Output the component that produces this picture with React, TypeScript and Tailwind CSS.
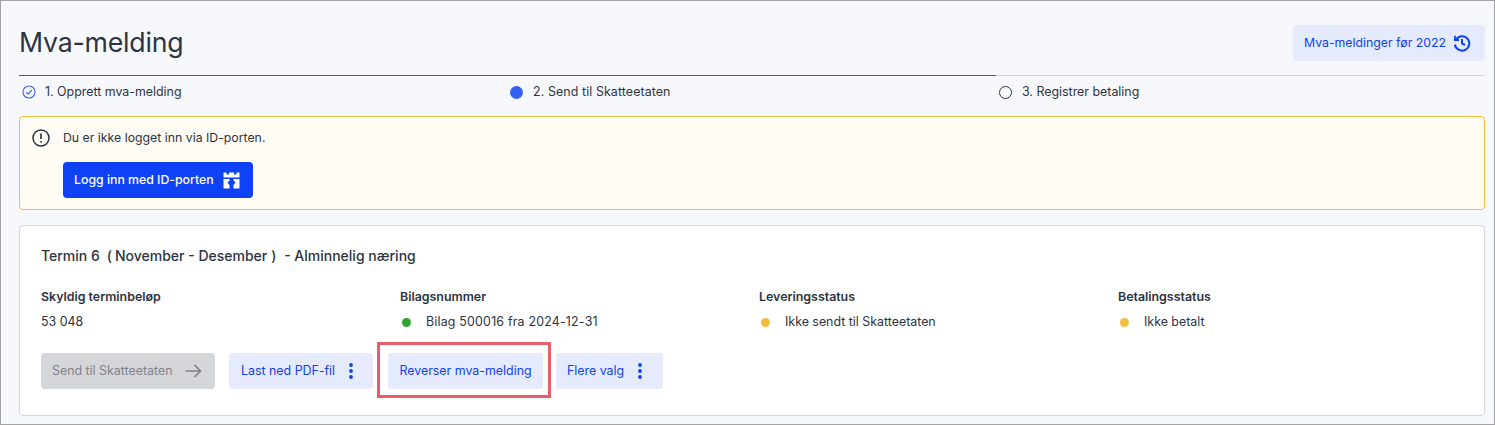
const FONT = "font-['Inter','Noto_Sans',sans-serif]";

function Dots() {
  return (
    <svg width="4" height="16" viewBox="0 0 4 16" className="ml-[14px]" fill="#0f41f5">
      <circle cx="2" cy="2" r="1.9" />
      <circle cx="2" cy="8" r="1.9" />
      <circle cx="2" cy="14" r="1.9" />
    </svg>
  );
}

function CheckCircle() {
  return (
    <svg width="14" height="14" viewBox="0 0 14 14" fill="none" stroke="#3e63f2" strokeWidth="1.1">
      <circle cx="7" cy="7" r="6" />
      <path d="M4.2 7.2 L6.2 9.2 L9.9 5.2" />
    </svg>
  );
}

function HistoryIcon() {
  return (
    <svg width="18" height="18" viewBox="0 0 18 18" fill="none" stroke="#0f41f5" strokeWidth="2">
      <path d="M3.2 5.2 A7.2 7.2 0 1 1 1.9 10.5" />
      <path d="M1.9 1.8 V6 H6.1" strokeWidth="1.8" />
      <path d="M9 5 V9.4 L12 11" />
    </svg>
  );
}

function CastleIcon() {
  return (
    <svg width="17" height="17" viewBox="0 0 17 17" fill="#fff">
      <path d="M0.5 0.5 H3.5 V2.5 H6 V0.5 H11 V2.5 H13.5 V0.5 H16.5 V5.5 H0.5 Z" />
      <path d="M0.5 7 H6.5 L6.5 8.5 L4.5 10.5 L6.5 13 V16.5 H0.5 Z" />
      <path d="M16.5 7 H10.5 L10.5 8.5 L12.5 10.5 L10.5 13 V16.5 H16.5 Z" />
    </svg>
  );
}

function Column({ title, children }: { title: string; children: React.ReactNode }) {
  return (
    <div className="flex flex-col">
      <div className="text-[12.4px] leading-[16px] font-semibold text-[#2c3442]">{title}</div>
      <div className="mt-[9px] flex h-[16px] items-center text-[12.4px] text-[#2c3442]">{children}</div>
    </div>
  );
}

function StatusDot({ color }: { color: string }) {
  return <span className={`mr-[15px] ml-[2px] h-[9px] w-[9px] rounded-full ${color}`} />;
}

export default function App() {
  return (
    <div className={`${FONT} h-[425px] w-[1495px] overflow-hidden border border-[#a3a3a3] bg-[#f7f8fc] pt-[22px] pr-[9px] pl-[18px] text-[#2c3442]`}>
      <div className="flex h-[38px] items-center justify-between">
        <h1 className="text-[26.7px] leading-[37px] font-normal tracking-[-0.2px] text-[#2c3442]">Mva-melding</h1>
        <button className="flex h-[36px] w-[192px] items-center self-end rounded-[4px] bg-[#e6eafd] pl-[11px] text-[12.3px] text-[#0f41f5]">
          Mva-meldinger før 2022
          <span className="ml-[7px]"><HistoryIcon /></span>
        </button>
      </div>

      <div className="mt-[14px] flex h-[1px]">
        <div className="w-[977px] bg-[#5c5f68]" />
        <div className="flex-1 bg-[#d4d5da]" />
      </div>

      <div className="mt-[8px] flex h-[16px] items-center text-[12.4px]">
        <div className="flex w-[488px] items-center pl-[3px]">
          <CheckCircle />
          <span className="ml-[9px]">1. Opprett mva-melding</span>
        </div>
        <div className="flex w-[489px] items-center pl-[3px]">
          <span className="h-[13px] w-[13px] rounded-full bg-[#3460f5]" />
          <span className="ml-[10px] tracking-[0.1px]">2. Send til Skatteetaten</span>
        </div>
        <div className="flex items-center pl-[3px]">
          <span className="h-[13px] w-[13px] rounded-full border-[1.5px] border-[#2c3442]" />
          <span className="ml-[10px]">3. Registrer betaling</span>
        </div>
      </div>

      <div className="mt-[16px] h-[94px] rounded-[4px] border border-[#f5bd3d] bg-[#fffcf5] pt-[12px] pl-[12px]">
        <div className="flex items-center">
          <svg width="18" height="18" viewBox="0 0 18 18" fill="none" stroke="#2c3442" strokeWidth="1.5">
            <circle cx="9" cy="9" r="8" />
            <path d="M9 4.6 V10" strokeWidth="1.7" />
            <circle cx="9" cy="12.8" r="0.6" fill="#2c3442" strokeWidth="0.8" />
          </svg>
          <span className="ml-[13px] text-[12.3px]">Du er ikke logget inn via ID-porten.</span>
        </div>
        <button className="mt-[15px] ml-[31px] flex h-[36px] w-[190px] items-center rounded-[4px] bg-[#0f41f5] pl-[11px] text-[12.3px] font-medium text-white">
          Logg inn med ID-porten
          <span className="ml-[9px]"><CastleIcon /></span>
        </button>
      </div>

      <div className="mt-[15px] h-[191px] rounded-[4px] border border-[#d4d5da] bg-white pt-[21px] pl-[21px]">
        <h2 className="text-[14px] leading-[18px] font-medium text-[#2c3442]">
          Termin 6<span className="mr-[3px] ml-[7px]">(</span>November - Desember<span className="mx-[4px]">)</span> - Alminnelig næring
        </h2>
        <div className="mt-[24px] grid w-[1436px] grid-cols-4">
          <Column title="Skyldig terminbeløp">53 048</Column>
          <Column title="Bilagsnummer"><StatusDot color="bg-[#2fa52f]" /><span className="tracking-[0.2px]">Bilag 500016 fra 2024-12-31</span></Column>
          <Column title="Leveringsstatus"><StatusDot color="bg-[#f5bd3d]" />Ikke sendt til Skatteetaten</Column>
          <Column title="Betalingsstatus"><StatusDot color="bg-[#f5bd3d]" />Ikke betalt</Column>
        </div>
        <div className="mt-[23px] flex items-center text-[12.4px]">
          <button className="flex h-[36px] w-[174px] items-center justify-between rounded-[4px] bg-[#d5d6da] pr-[13px] pl-[11px] text-[#80838a]">
            Send til Skatteetaten
            <svg width="17" height="14" viewBox="0 0 17 14" fill="none" stroke="#80838a" strokeWidth="1.7">
              <path d="M0.5 7 H15.5 M9.5 1 L15.5 7 L9.5 13" />
            </svg>
          </button>
          <button className="ml-[14px] flex h-[36px] w-[144px] items-center rounded-[4px] bg-[#e6eafd] pl-[12px] text-[#0f41f5]">
            Last ned PDF-fil
            <Dots />
          </button>
          <div className="relative ml-[15px]">
            <button className="flex h-[36px] w-[155px] items-center justify-center rounded-[4px] bg-[#e6eafd] text-[#0f41f5]">
              Reverser mva-melding
            </button>
            <div className="absolute -top-[11px] -right-[8px] -bottom-[9px] -left-[11px] border-[3px] border-[#ec5b6b]" />
          </div>
          <button className="ml-[13px] flex h-[36px] w-[107px] items-center rounded-[4px] bg-[#e6eafd] pl-[11px] text-[#0f41f5]">
            Flere valg
            <Dots />
          </button>
        </div>
      </div>
    </div>
  );
}
